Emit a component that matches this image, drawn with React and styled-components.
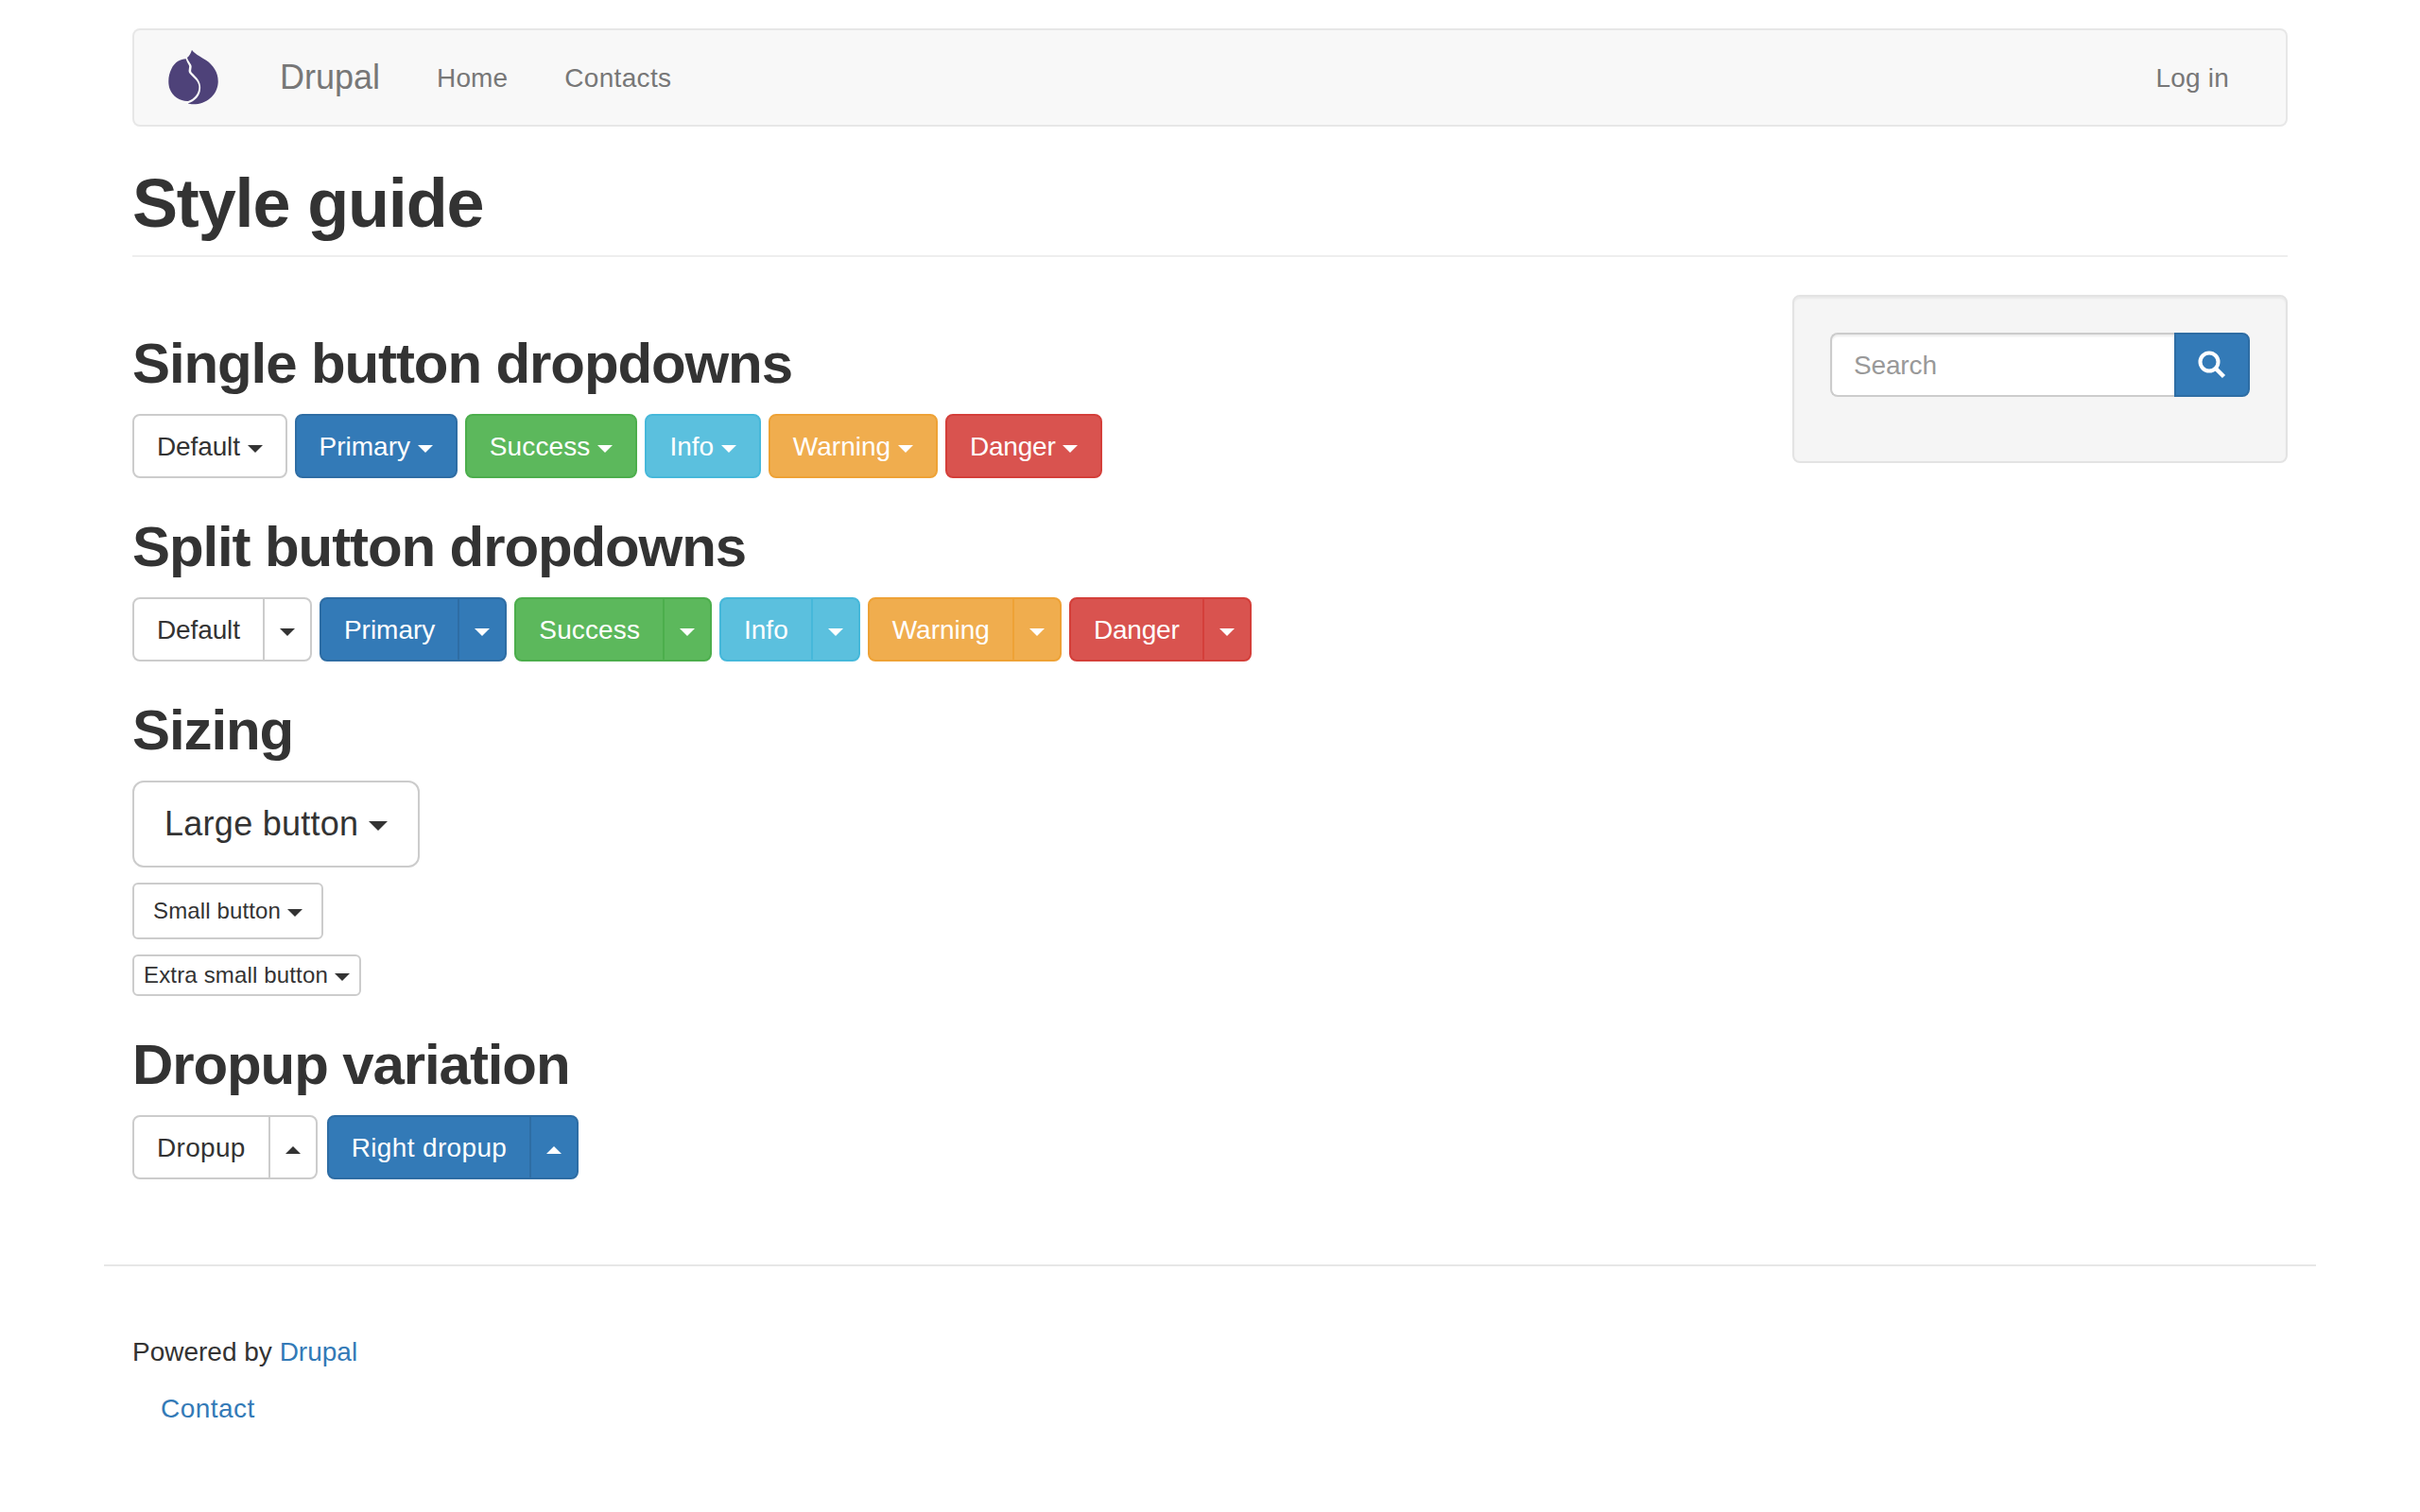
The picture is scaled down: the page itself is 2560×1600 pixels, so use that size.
import React from "react";
import styled, { createGlobalStyle, css } from "styled-components";

const Global = createGlobalStyle`
  html, body { margin: 0; padding: 0; background: #fff; }
  body {
    font-family: "Liberation Sans", Arial, sans-serif;
    font-size: 28px;
    line-height: 40px;
    color: #333;
  }
  * { box-sizing: border-box; }
`;

const palette = {
  default: { bg: "#fff", border: "#ccc", fg: "#333" },
  primary: { bg: "#337ab7", border: "#2e6da4", fg: "#fff" },
  success: { bg: "#5cb85c", border: "#4cae4c", fg: "#fff" },
  info: { bg: "#5bc0de", border: "#46b8da", fg: "#fff" },
  warning: { bg: "#f0ad4e", border: "#eea236", fg: "#fff" },
  danger: { bg: "#d9534f", border: "#d43f3a", fg: "#fff" },
};

const sizes = {
  md: css`font-size: 28px; line-height: 40px; padding: 13px 24px 11px; border-radius: 8px;`,
  lg: css`font-size: 36px; line-height: 48px; padding: 20px 32px; border-radius: 12px;`,
  sm: css`font-size: 24px; line-height: 36px; padding: 10px 20px; border-radius: 6px;`,
  xs: css`font-size: 24px; line-height: 36px; padding: 2px 10px; border-radius: 6px;`,
};

const Container = styled.div`
  width: 2340px;
  margin: 0 auto;
  padding: 30px 30px 0;
`;

const Navbar = styled.nav`
  display: flex;
  align-items: center;
  height: 104px;
  border: 2px solid #e7e7e7;
  border-radius: 8px;
  background: #f8f8f8;
  color: #777;
  margin-bottom: 40px;
  padding-right: 30px;
`;

const Logo = styled.svg`
  width: 54px;
  height: 62px;
  margin: 0 34px 0 36px;
  flex: none;
  filter: blur(0.5px);
`;

const Brand = styled.a`
  font-size: 36px;
  line-height: 40px;
  padding: 0 30px;
`;

const NavLink = styled.a`
  padding: 1px 30px 0;
  font-size: 28px;
  line-height: 40px;
  letter-spacing: ${(p) => p.$track || 0}px;
`;

const Spacer = styled.div`
  flex: 1;
`;

const PageHeader = styled.header`
  padding: 2px 0 16px;
  border-bottom: 2px solid #eee;
  margin-bottom: 40px;
`;

const H1 = styled.h1`
  margin: 0;
  font-size: 72px;
  line-height: 78px;
  font-weight: 700;
  letter-spacing: -1.15px;
  color: #333;
`;

const Row = styled.div`
  display: flex;
  align-items: flex-start;
`;

const Main = styled.main`
  flex: 1;
`;

const Aside = styled.aside`
  width: 524px;
  flex: none;
`;

const Well = styled.div`
  background: #f5f5f5;
  border: 2px solid #e3e3e3;
  border-radius: 8px;
  padding: 38px;
  box-shadow: inset 0 2px 2px rgba(0, 0, 0, 0.05);
  height: 178px;
`;

const InputGroup = styled.div`
  display: flex;
  height: 68px;
`;

const SearchInput = styled.input`
  flex: 1;
  min-width: 0;
  height: 68px;
  border: 2px solid #ccc;
  border-right: 0;
  border-radius: 8px 0 0 8px;
  padding: 13px 24px 11px 23px;
  font: 28px/40px "Liberation Sans", Arial, sans-serif;
  letter-spacing: -0.15px;
  color: #555;
  background: #fff;
  box-shadow: inset 0 2px 2px rgba(0, 0, 0, 0.075);
  &::placeholder { color: #999; opacity: 1; }
`;

const SearchButton = styled.button`
  width: 80px;
  height: 68px;
  flex: none;
  display: flex;
  align-items: center;
  justify-content: center;
  padding: 0;
  background: #337ab7;
  border: 2px solid #2e6da4;
  border-radius: 0 8px 8px 0;
`;

const H2 = styled.h2`
  margin: 40px 0 20px;
  font-size: 60px;
  line-height: 66px;
  font-weight: 700;
  letter-spacing: -1.1px;
  color: #333;
`;

const Buttons = styled.div`
  display: flex;
  gap: ${(p) => p.$gap || 8}px;
`;

const Stack = styled.div`
  display: flex;
  flex-direction: column;
  align-items: flex-start;
  gap: 16px;
`;

const Button = styled.button`
  display: inline-block;
  font-family: inherit;
  font-weight: 400;
  white-space: pre;
  border-width: 2px;
  border-style: solid;
  letter-spacing: ${(p) => p.$track || 0}px;
  background: ${(p) => palette[p.$kind].bg};
  border-color: ${(p) => palette[p.$kind].border};
  color: ${(p) => palette[p.$kind].fg};
  ${(p) => sizes[p.$size || "md"]}
`;

const Group = styled.div`
  display: inline-flex;
`;

const GroupMain = styled(Button)`
  border-radius: 8px 0 0 8px;
`;

const GroupToggle = styled(Button)`
  border-radius: 0 8px 8px 0;
  margin-left: -2px;
  padding-left: 16px;
  padding-right: 16px;
`;

const Caret = styled.span`
  display: inline-block;
  width: 0;
  height: 0;
  vertical-align: middle;
  border-left: ${(p) => (p.$big ? 10 : 8)}px solid transparent;
  border-right: ${(p) => (p.$big ? 10 : 8)}px solid transparent;
  ${(p) =>
    p.$up
      ? css`border-bottom: 8px solid currentColor;`
      : css`border-top: ${p.$big ? 10 : 8}px solid currentColor;`}
`;

const Footer = styled.footer`
  width: 2340px;
  margin: 90px auto 0;
  border-top: 2px solid #e7e7e7;
  padding: 71px 30px 59px;
`;

const Para = styled.p`
  margin: 0 0 20px;
`;

const Link = styled.a`
  color: #337ab7;
  letter-spacing: ${(p) => p.$track || 0}px;
`;

const FooterList = styled.ul`
  list-style: none;
  margin: 0;
  padding: 0 0 0 30px;
`;

const singles = [
  ["default", "Default", -0.12],
  ["primary", "Primary", 0],
  ["success", "Success", 0.12],
  ["info", "Info", 0],
  ["warning", "Warning", 0],
  ["danger", "Danger", -0.2],
];

const Split = ({ kind, label, up, track }) => (
  <Group>
    <GroupMain $kind={kind} $track={track}>{label}</GroupMain>
    <GroupToggle $kind={kind}>
      <Caret $up={up} />
    </GroupToggle>
  </Group>
);

export default function App() {
  return (
    <>
      <Global />
      <Container>
        <Navbar>
          <Logo viewBox="50 30 162 186">
            <path
              fill="#4e4279"
              d="M125 35 C130 45 150 55 170 68 C195 85 210 110 208 140 C205 180 170 208 130 208 C122 208 117 207 112 205 C135 198 155 180 152 150 C150 130 135 118 125 108 C118 100 128 92 122 82 C118 75 112 68 110 60 C117 55 122 45 125 35 Z"
            />
            <path
              fill="#4e4279"
              d="M106 64 C90 64 70 74 60 96 C50 116 48 140 55 160 C64 184 88 199 113 198 C134 191 149 172 147 150 C145 132 128 122 118 110 C110 100 120 92 115 83 C112 78 108 71 106 64 Z"
            />
          </Logo>
          <Brand>Drupal</Brand>
          <NavLink $track={0.1}>Home</NavLink>
          <NavLink $track={0.35}>Contacts</NavLink>
          <Spacer />
          <NavLink $track={0.2}>Log in</NavLink>
        </Navbar>
        <PageHeader>
          <H1>Style guide</H1>
        </PageHeader>
        <Row>
          <Main>
            <H2>Single button dropdowns</H2>
            <Buttons>
              {singles.map(([k, l, t]) => (
                <Button key={k} $kind={k} $track={t}>
                  {l} <Caret />
                </Button>
              ))}
            </Buttons>
            <H2>Split button dropdowns</H2>
            <Buttons>
              {singles.map(([k, l, t]) => (
                <Split key={k} kind={k} label={l} track={t} />
              ))}
            </Buttons>
            <H2>Sizing</H2>
            <Stack>
              <Button $kind="default" $size="lg" $track={0.27}>
                Large button <Caret $big />
              </Button>
              <Button $kind="default" $size="sm" $track={0.13}>
                Small button <Caret />
              </Button>
              <Button $kind="default" $size="xs" $track={0.16}>
                Extra small button <Caret />
              </Button>
            </Stack>
            <H2>Dropup variation</H2>
            <Buttons $gap={10}>
              <Split kind="default" label="Dropup" up track={0.3} />
              <Split kind="primary" label="Right dropup" up track={0.36} />
            </Buttons>
          </Main>
          <Aside>
            <Well>
              <InputGroup>
                <SearchInput placeholder="Search" />
                <SearchButton aria-label="Search">
                  <svg width="30" height="30" viewBox="0 0 30 30" fill="none" stroke="#fff" strokeWidth="4">
                    <circle cx="12" cy="12" r="9.5" />
                    <path d="M19 19 L27.5 27.5" strokeWidth="4.5" />
                  </svg>
                </SearchButton>
              </InputGroup>
            </Well>
          </Aside>
        </Row>
      </Container>
      <Footer>
        <Para>
          Powered by <Link>Drupal</Link>
        </Para>
        <FooterList>
          <li>
            <Link $track={0.45}>Contact</Link>
          </li>
        </FooterList>
      </Footer>
    </>
  );
}
